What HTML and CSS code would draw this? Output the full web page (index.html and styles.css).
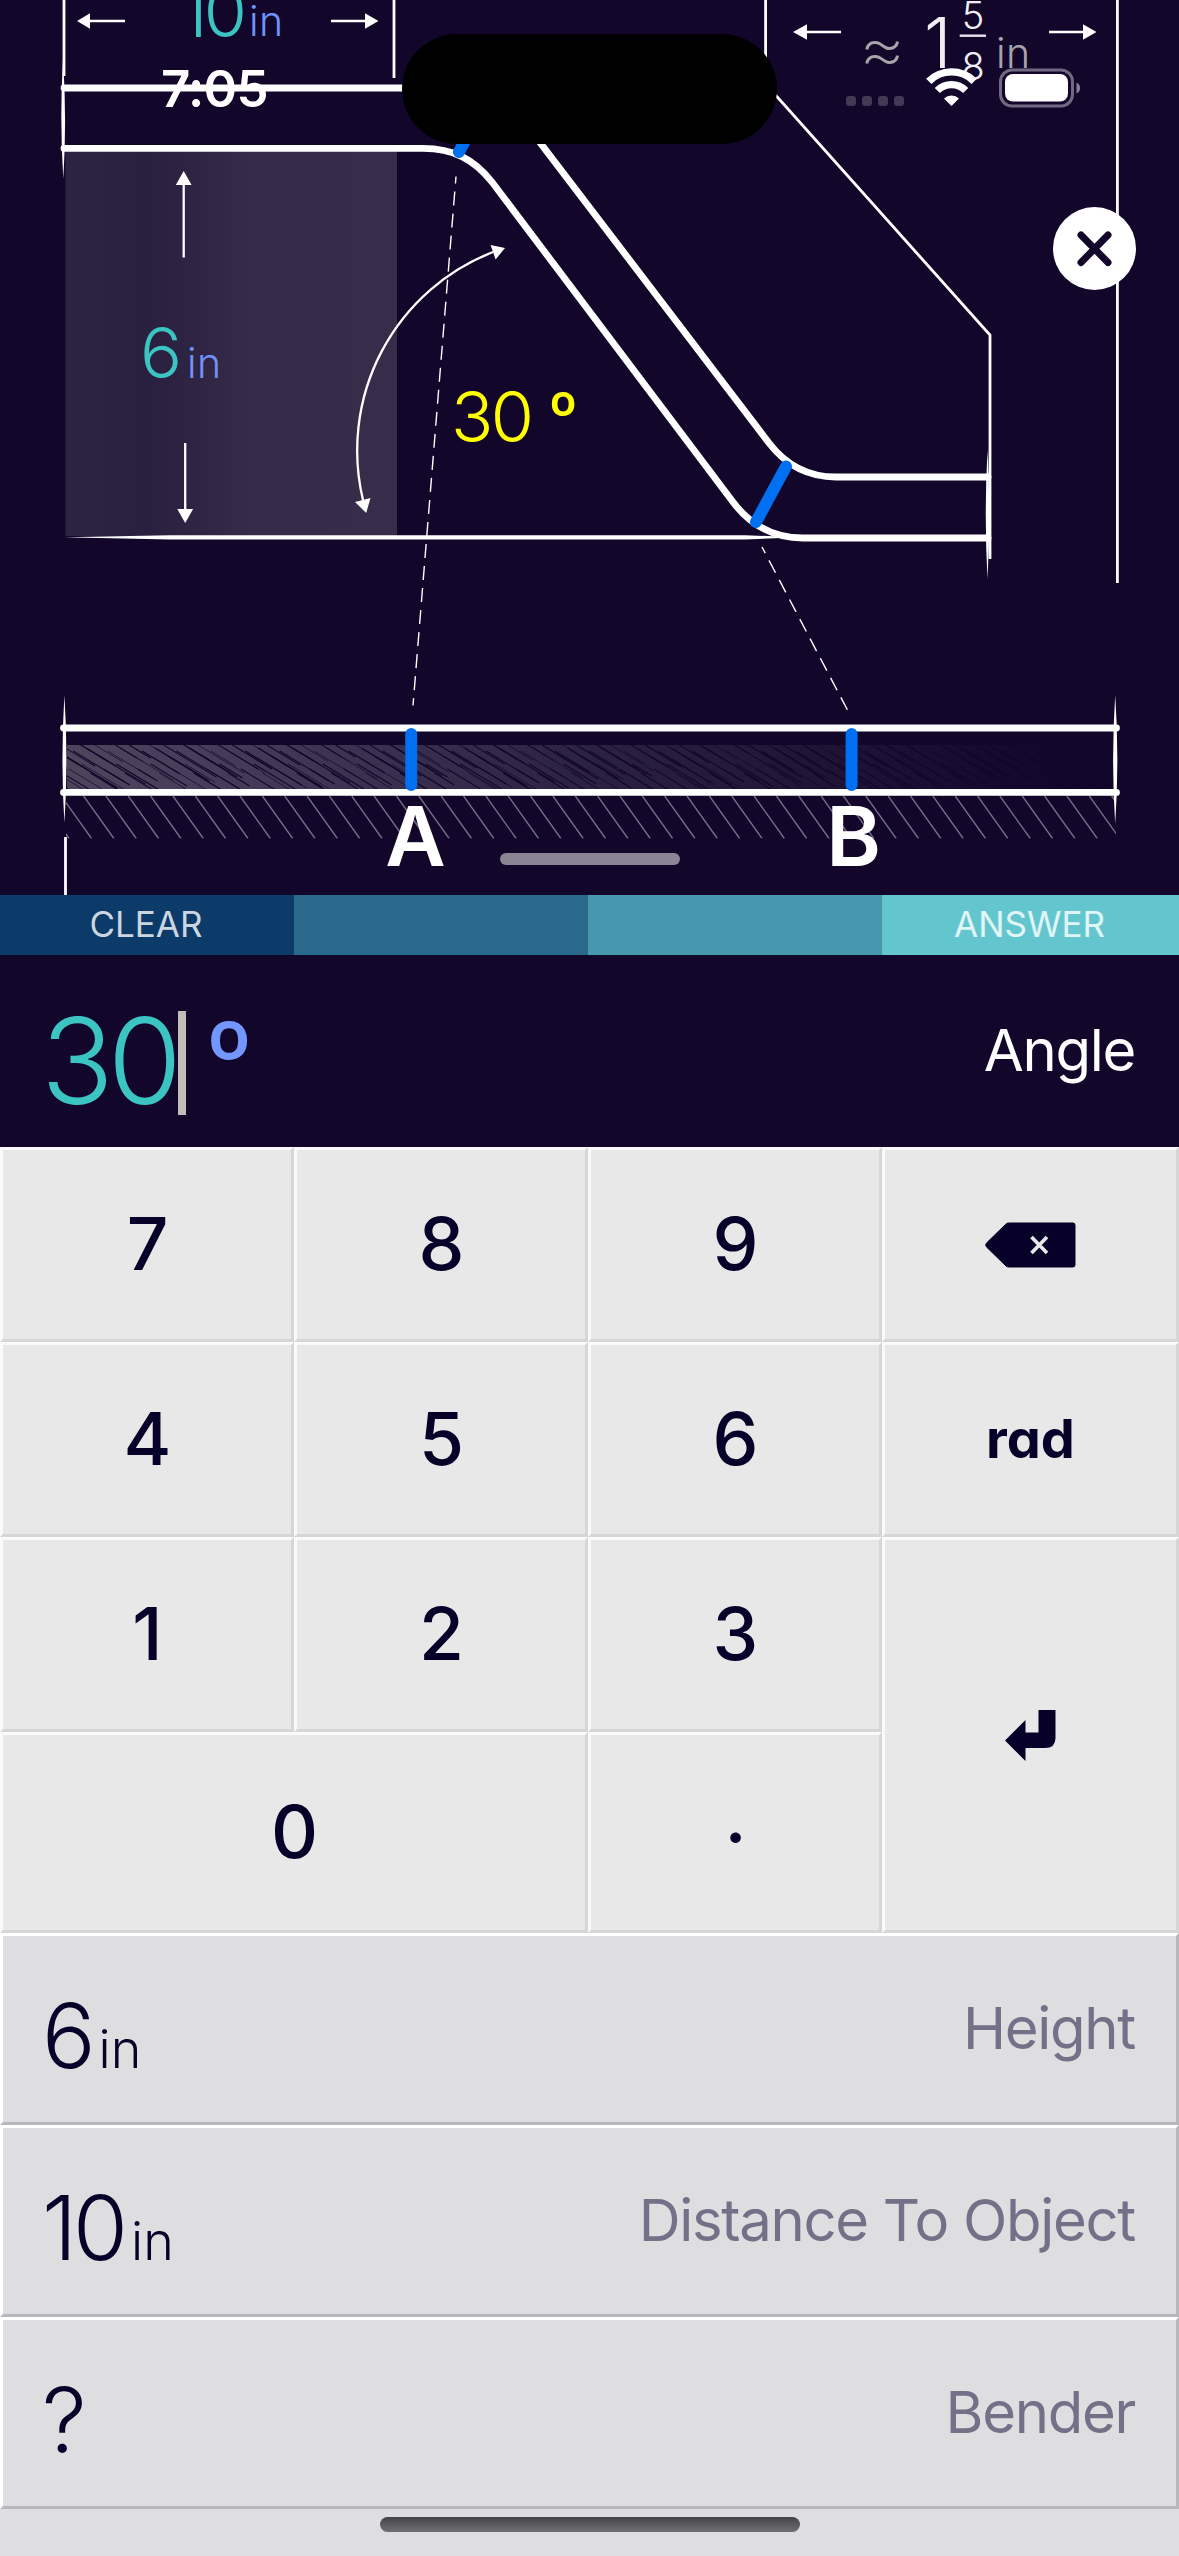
FILE: index.html
```html
<!DOCTYPE html>
<html lang="en">
<head>
  <meta charset="UTF-8" />
  <meta name="viewport" content="width=device-width, initial-scale=1.0"/>
  <title>Offset Bend Calculator</title>
  <link rel="stylesheet" href="styles.css">
</head>
<body>

  <!-- Bend drawing -->
  <section class="diagram">
    <svg class="drawing" width="1179" height="895" viewBox="0 0 1179 895">
      <defs>
        <linearGradient id="wall" x1="0" x2="1" y1="0" y2="0">
          <stop offset="0" stop-color="#2d2442"/>
          <stop offset="0.25" stop-color="#291f3e"/>
          <stop offset="0.56" stop-color="#362b49"/>
          <stop offset="1" stop-color="#372c4a"/>
        </linearGradient>
        <linearGradient id="shade" x1="0" x2="1" y1="0" y2="0">
          <stop offset="0" stop-color="#4e445b"/>
          <stop offset="0.12" stop-color="#483d5a"/>
          <stop offset="0.5" stop-color="#2b2142"/>
          <stop offset="0.95" stop-color="#12072b"/>
        </linearGradient>
        <clipPath id="pipeClip"><rect x="67" y="744" width="1046" height="46"/></clipPath>
        <clipPath id="groundClip"><rect x="66" y="796" width="1050" height="42.5"/></clipPath>
      </defs>

      <rect x="65.5" y="150" width="331.5" height="386" fill="url(#wall)"/>

      <!-- dimension lines -->
      <g class="thin">
        <path d="M64 0V76M394 0V78M765.6 0V84L990 335V559M1117.4 0V583M65.5 837V895"/>
      </g>
      <g class="arrows">
        <path d="M88 21H125M331 21H366M805 32H841M1049 32H1085M183.7 183V257.5M185.2 443V511"/>
        <path class="solid" d="M77 21L90 13.3V28.7ZM378.5 21L365 13.3V28.7ZM793 32L807 24.3V39.7ZM1096.5 32L1083 24.3V39.7ZM183.7 171L175.8 185H191.6ZM185.2 523L177.3 509H193.1Z"/>
        <path d="M493 252A213 213 0 0 0 363 500"/>
        <path class="solid" d="M505 248L490.6 245L495.6 259.5ZM366.2 513L355 502L370.5 498Z"/>
      </g>
      <path class="solid" d="M64 537.3L170 535.2H745L800 537.3L745 539.5H170Z"/>

      <!-- straight pipe shading -->
      <rect x="67" y="745" width="1046" height="45" fill="url(#shade)"/>
      <g id="scratches" clip-path="url(#pipeClip)"></g>
      <g id="ground" clip-path="url(#groundClip)"></g>

      <!-- bent pipe and straight pipe -->
      <g class="pipe">
        <path d="M64 88H440Q505 88 532 132L769 443Q795 477 836 477H988"/>
        <path d="M64 148.4H423C453 148.4 474 159 492 182L733 502Q760 538 803 538H988"/>
        <path d="M63.5 728H1116.5M63.5 792.4H1116.5"/>
      </g>
      <path class="solid" d="M63 58Q59.5 120 63.3 179Q67 120 63 58ZM987.5 450Q984 515 987.5 579Q991 515 987.5 450Z"/>
      <path class="solid" d="M64.4 695Q60.5 760 64.4 823Q68.5 760 64.4 695ZM1115.2 695Q1111 760 1115.2 824Q1119.5 760 1115.2 695Z"/>

      <!-- marks -->
      <g class="dashes">
        <path d="M456 176.5L413 705.5"/>
        <path d="M762 547L848 711"/>
      </g>
      <g class="marks">
        <path d="M459 152L489 95M786 466.5L756 522M411.2 734V785M851.6 734V785"/>
      </g>

      <g class="numbers">
        <text x="180" y="36.5" class="value" textLength="67">10</text>
        <text x="249" y="36" class="unit" textLength="34">in</text>
        <text x="140" y="378" class="value">6</text>
        <text x="187" y="377.7" class="unit" textLength="34">in</text>
        <text x="451" y="441.5" class="angle" textLength="83">30</text>
        <text x="563" y="441.5" class="angle degree">º</text>
        <text x="859" y="73" class="about">≈</text>
        <text x="924" y="67.7" class="whole">1</text>
        <text x="973" y="28.5" class="part">5</text>
        <path d="M959.7 35.7H986" stroke="#e9e7ec" stroke-width="2.4"/>
        <text x="973" y="80" class="part">8</text>
        <text x="996" y="67.7" class="unit dim" textLength="34">in</text>
        <text x="415.5" y="865.5" class="letter">A</text>
        <text x="853.5" y="865.5" class="letter">B</text>
      </g>
    </svg>

    <div class="island"></div>

    <header class="status">
      <span class="time">7:05</span>
      <div class="status-icons">
        <svg width="130" height="40" viewBox="0 0 130 40">
          <g fill="#433856">
            <rect x="0" y="28" width="10" height="10" rx="3"/>
            <rect x="16" y="28" width="10" height="10" rx="3"/>
            <rect x="32" y="28" width="10" height="10" rx="3"/>
            <rect x="48" y="28" width="10" height="10" rx="3"/>
          </g>
          <g fill="none" stroke="#fff" stroke-width="7.4">
            <path d="M82.8 13.3A32 32 0 0 1 128.2 13.3"/>
            <path d="M91.3 22.5A20 20 0 0 1 119.7 22.5"/>
          </g>
          <path d="M105.5 38L98 30.5A11 11 0 0 1 113 30.5Z" fill="#fff"/>
        </svg>
        <svg width="82" height="40" viewBox="0 0 82 40">
          <rect x="1.5" y="2" width="72" height="36" rx="11.5" fill="none" stroke="#716981" stroke-width="3"/>
          <rect x="6" y="6" width="63" height="27.5" rx="8" fill="#fff"/>
          <path d="M77.5 14.5Q81 16 81 20Q81 24 77.5 25.5Z" fill="#8a8496"/>
        </svg>
      </div>
    </header>

    <button class="close" aria-label="Close">
      <svg width="83" height="83" viewBox="0 0 83 83"><path d="M28 28L55 55.5M55 28L28 55.5"/></svg>
    </button>
    <div class="grabber"></div>
  </section>

  <nav class="actions">
    <button class="clear">CLEAR</button>
    <button class="blank-one"></button>
    <button class="blank-two"></button>
    <button class="answer">ANSWER</button>
  </nav>

  <section class="entry">
    <div class="entry-value">30<span class="cursor"></span><span class="entry-degree">º</span></div>
    <span class="entry-label">Angle</span>
  </section>

  <section class="keypad">
    <button>7</button>
    <button>8</button>
    <button>9</button>
    <button class="delete" aria-label="Delete">
      <svg width="92" height="48" viewBox="0 0 92 48">
        <path d="M24 2H88Q90 2 90 4V44Q90 46 88 46H24Q22 46 21 45L1.5 26Q0 24 1.5 22L21 3Q22 2 24 2Z" fill="#070028" stroke="#070028"/>
        <path d="M46.5 16L62 32M62 16L46.5 32" stroke="#e8e8e8" stroke-width="3.6"/>
      </svg>
    </button>
    <button>4</button>
    <button>5</button>
    <button>6</button>
    <button class="rad">rad</button>
    <button>1</button>
    <button>2</button>
    <button>3</button>
    <button class="enter" aria-label="Enter">
      <svg width="51" height="51" viewBox="0 0 51 51"><path d="M33.5 0H50.5V28Q50.5 38 40 38H20.5V51L0 30.5L20.5 10V22.5H33.5Z" fill="#070028"/></svg>
    </button>
    <button class="zero">0</button>
    <button class="point">.</button>
  </section>

  <section class="fields">
    <div class="field">
      <span class="field-value">6<small>in</small></span>
      <span class="field-label">Height</span>
    </div>
    <div class="field">
      <span class="field-value">10<small>in</small></span>
      <span class="field-label">Distance To Object</span>
    </div>
    <div class="field">
      <span class="field-value">?</span>
      <span class="field-label">Bender</span>
    </div>
  </section>

  <footer class="home"><div class="home-bar"></div></footer>

  <script>
    const ns = "http://www.w3.org/2000/svg";

    function addLine(parent, x1, y1, x2, y2, width) {
      const line = document.createElementNS(ns, "line");
      line.setAttribute("x1", x1);
      line.setAttribute("y1", y1);
      line.setAttribute("x2", x2);
      line.setAttribute("y2", y2);
      line.setAttribute("stroke-width", width);
      parent.appendChild(line);
    }

    // ground hatching under the pipe
    const ground = document.getElementById("ground");
    for (let i = 0; i < 49; i++) {
      const x = 69.2 + i * 22.35;
      addLine(ground, x - 30.3, 796, x, 838.5, 1.3);
    }

    // uneven pencil strokes inside the pipe
    const scratches = document.getElementById("scratches");
    const starts = [0, 21, 5, 30, 2, 13, 26, 8];
    for (let i = 0; i < 270; i++) {
      const x = i * 4.3 - 60;
      const top = 743 + starts[i % 8];
      const length = 12 + (i * 11) % 23;
      addLine(scratches, x, top, x + length * 1.65, top + length, 0.7 + (i % 3) * 0.35);
    }
  </script>

</body>
</html>
```
FILE: styles.css
```css
* {
  box-sizing: border-box;
}
body {
  margin: 0;
  width: 1179px;
  height: 2556px;
  overflow: hidden;
  background: #dedee0;
  font-family: Inter, "Liberation Sans", sans-serif;
  color: #070028;
}
button {
  border: none;
  margin: 0;
  padding: 0;
  font-family: inherit;
  color: inherit;
}
svg {
  display: block;
}

/* drawing */
.diagram {
  position: relative;
  height: 895px;
  background: #12072b;
}
.thin, .arrows {
  fill: none;
  stroke: white;
  stroke-width: 2.8;
}
.arrows {
  stroke-width: 2.3;
}
.solid {
  fill: white;
  stroke: none;
}
.pipe {
  fill: none;
  stroke: white;
  stroke-width: 6.8;
  stroke-linecap: round;
}
.dashes {
  stroke: white;
  stroke-width: 1.4;
  stroke-dasharray: 14 8.1;
  stroke-dashoffset: 7;
}
.marks {
  stroke: #0070f3;
  stroke-width: 12;
  stroke-linecap: round;
}
#scratches {
  stroke: #12072b;
}
#ground {
  stroke: #777087;
}
.value, .angle, .whole {
  font-size: 70px;
  font-weight: 300;
}
.value {
  fill: #3cc4c3;
}
.angle {
  fill: #ffff00;
}
.degree, .entry-degree {
  font-family: "Open Sans", sans-serif;
  font-weight: 600;
  text-anchor: middle;
}
.whole {
  fill: #f1eff3;
}
.unit {
  font-size: 41px;
  font-weight: 300;
  fill: #7191fb;
}
.unit.dim, .about {
  fill: #a7a5aa;
}
.about {
  font-size: 72px;
  font-weight: 200;
}
.part {
  font-size: 38px;
  font-weight: 300;
  fill: #f1eff3;
  text-anchor: middle;
}
.letter {
  font-size: 83px;
  font-weight: 600;
  fill: white;
  text-anchor: middle;
}
.island {
  position: absolute;
  left: 402px;
  top: 34px;
  width: 375px;
  height: 110px;
  border-radius: 55px;
  background: black;
}
.status {
  position: absolute;
  top: 0;
  left: 0;
  right: 0;
  height: 176px;
  padding: 0 98px 0 161px;
  display: flex;
  align-items: center;
  justify-content: space-between;
  color: white;
}
.time {
  font-size: 51px;
  font-weight: 600;
  letter-spacing: -0.7px;
}
.status-icons {
  display: flex;
  gap: 23px;
}
.close {
  position: absolute;
  left: 1053px;
  top: 207px;
  width: 83px;
  height: 83px;
  border-radius: 50%;
  background: white;
}
.close path {
  stroke: #12072b;
  stroke-width: 7;
  stroke-linecap: round;
}
.grabber {
  position: absolute;
  left: 500px;
  top: 853px;
  width: 180px;
  height: 12px;
  border-radius: 6px;
  background: #8a8495;
}

/* action bar */
.actions {
  display: grid;
  grid-template-columns: 294px 294px 294px 297px;
  height: 60px;
}
.actions button {
  padding: 0 2px 2px 0;
  font-size: 35px;
}
.clear {
  background: #0c3a69;
  color: #cbd6e0;
}
.blank-one {
  background: #29698c;
}
.blank-two {
  background: #4797ae;
}
.actions .answer {
  background: #63c6cf;
  color: #e0f5f6;
}

.entry {
  display: flex;
  justify-content: space-between;
  align-items: center;
  height: 192px;
  padding: 0 44px 0 41px;
  background: #12072b;
  color: white;
}
.entry-value {
  display: flex;
  align-items: center;
  padding-top: 20px;
  font-size: 120px;
  font-weight: 300;
  line-height: 120px;
  letter-spacing: -6px;
  color: #3cc4c3;
}
.cursor {
  width: 8px;
  height: 104px;
  margin: 3px 0 0 2px;
  background: #c4beba;
}
.entry-degree {
  margin: -4px 0 0 22px;
  font-size: 112px;
  color: #7496ff;
}
.entry-label, .field-label {
  font-size: 58px;
  letter-spacing: -1.3px;
}
.entry-label {
  padding-bottom: 3px;
}

/* keys */
.keypad {
  display: grid;
  grid-template-columns: 294px 294px 294px 297px;
  grid-template-rows: 195px 195px 195px 201px;
}
.keypad button {
  display: flex;
  align-items: center;
  justify-content: center;
  padding: 0 0 3px 1px;
  background: #e8e8e8;
  border: 3px solid #fafafa;
  border-right-color: #d6d6d6;
  border-bottom-color: #d6d6d6;
  font-size: 73px;
  font-weight: 500;
}
.keypad .rad {
  padding: 0 0 2px;
  font-size: 54px;
  font-weight: 700;
  font-feature-settings: "cv11";
}
.keypad .delete {
  padding: 0;
}
.keypad .enter {
  grid-row: span 2;
  padding: 0;
}
.zero {
  grid-column: span 2;
}
.keypad .point {
  padding-bottom: 34px;
}

/* other inputs */
.field {
  display: flex;
  justify-content: space-between;
  align-items: center;
  height: 192px;
  padding: 0 41px 0 39px;
  background: #dedee0;
  border: 3px solid white;
  border-right-color: #b8b8bc;
  border-bottom-color: #b8b8bc;
}
.field-value {
  padding-top: 13px;
  font-size: 89px;
  font-weight: 300;
  letter-spacing: -4px;
}
.field-value small {
  margin-left: 7px;
  font-size: 52px;
  letter-spacing: 0;
}
.field-label {
  padding-bottom: 3px;
  color: #747088;
}
.home {
  display: flex;
  justify-content: center;
  height: 47px;
  padding-top: 8px;
}
.home-bar {
  width: 420px;
  height: 15px;
  border-radius: 8px;
  background: linear-gradient(#444446, #707072);
}
```
